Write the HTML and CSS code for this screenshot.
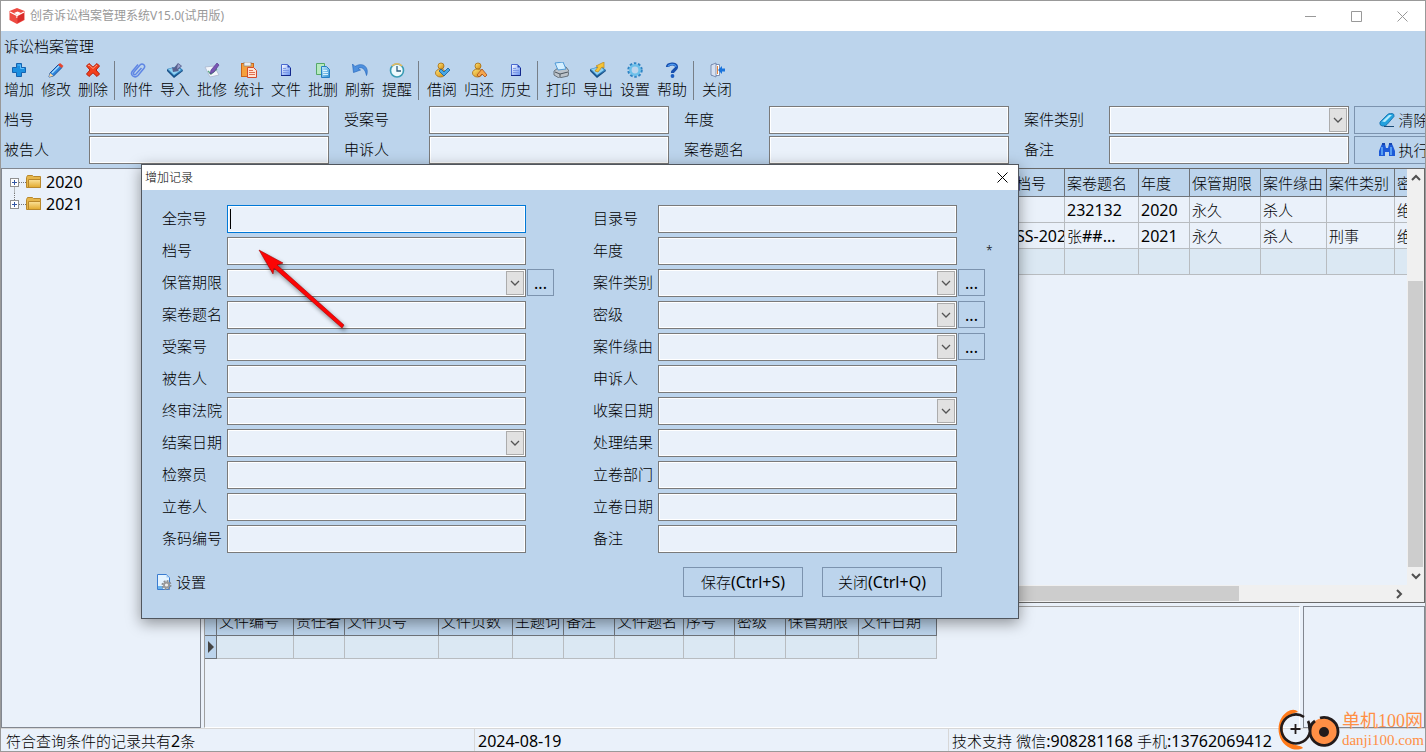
FILE: index.html
```html
<!DOCTYPE html>
<html lang="zh-CN">
<head>
<meta charset="utf-8">
<title>创奇诉讼档案管理系统V15.0(试用版)</title>
<link rel="stylesheet" href="styles.css">
</head>
<body>
<svg class="sprite" aria-hidden="true">
  <defs>
    <linearGradient id="gold" x1="0" y1="0" x2="1" y2="1"><stop offset="0" stop-color="#ffe57a"/><stop offset="1" stop-color="#d08a10"/></linearGradient>
    <linearGradient id="sky" x1="0" y1="0" x2="1" y2="1"><stop offset="0" stop-color="#c4ecff"/><stop offset="1" stop-color="#2f8fd0"/></linearGradient>
    <linearGradient id="doc" x1="0" y1="0" x2="1" y2="1"><stop offset="0" stop-color="#ffffff"/><stop offset="1" stop-color="#5f8cf0"/></linearGradient>
    <linearGradient id="folder" x1="0" y1="0" x2="0" y2="1"><stop offset="0" stop-color="#fbe29a"/><stop offset="1" stop-color="#e2a92c"/></linearGradient>
  </defs>
  <symbol id="chev" viewBox="0 0 10 10"><path d="M1 3l4 4 4-4" fill="none" stroke="#555" stroke-width="1.3"/></symbol>
  <symbol id="file" viewBox="0 0 16 16"><path d="M3.500 2.500h6l3 3v8h-9z" fill="url(#doc)" stroke="#4a6ad0"/><path d="M9.500 2.500v3h3z" fill="#2746b8"/><path d="M5 6.500h3M5 8.500h6M5 10.500h6" stroke="#7d9ae8"/><path d="M3 13.500h9.500V6" fill="none" stroke="#14288c"/></symbol>
  <symbol id="person" viewBox="0 0 16 16"><ellipse cx="6.500" cy="11" rx="5" ry="4" fill="url(#gold)" stroke="#a86c10" stroke-width=".8"/><circle cx="7" cy="4" r="3" fill="url(#gold)" stroke="#a86c10" stroke-width=".8"/></symbol>
  <symbol id="tray" viewBox="0 0 16 16"><path d="M0 7l11-3 5 4-9 7z" fill="#2c7ebb"/><path d="M1 7l10-2 3 3-7 5z" fill="#8fd0f2"/><path d="M0 7v2l7 7 9-7V8l-9 6z" fill="#174f86"/></symbol>
</svg>

<div class="window">
  <header class="titlebar">
    <svg class="logo" viewBox="0 0 18 18"><path d="M9 1l7.500 3v9L9 17l-7.500-4V4z" fill="#ee4a42"/><path d="M2 5l7 3.500L16 5M9 8.500V11" fill="none" stroke="#fff" stroke-width="1.200"/><path d="M6 6l3.500-1.500L13 6 9.500 8z" fill="#fff"/><path d="M9.500 9.500L16 6v6.500L9.500 16z" fill="#d92c2b"/></svg>
    <h1>创奇诉讼档案管理系统V15.0(试用版)</h1>
    <div class="winbtns">
      <button aria-label="最小化"><svg viewBox="0 0 11 11"><path d="M0 5.500h11"/></svg></button>
      <button aria-label="最大化"><svg viewBox="0 0 11 11"><path d="M.5.500h10v10H.5z"/></svg></button>
      <button aria-label="关闭"><svg viewBox="0 0 11 11"><path d="M.5.500l10 10M10.500.500l-10 10"/></svg></button>
    </div>
  </header>

  <div class="menubar">诉讼档案管理</div>

  <nav class="toolbar">
    <button><svg viewBox="0 0 16 16"><path d="M5.500 1.500h5v4h4v5h-4v4h-5v-4h-4v-5h4z" fill="#1c8fe0" stroke="#1563b0"/><path d="M6.500 3h3v3.500H13" fill="none" stroke="#5fc0ff"/></svg>增加</button>
    <button><svg viewBox="0 0 16 16"><path d="M2 11L10.500 2.500l3.500 3L5.500 14 1 15z" fill="#2f86dc" stroke="#174f9c"/><path d="M10 3l2-2 3.500 3-2 2z" fill="#e6452e"/><path d="M1 15l1-4 3.500 3z" fill="#ffd9a0"/><path d="M4 11l7-7" stroke="#a6dcff" stroke-width="1.500"/></svg>修改</button>
    <button><svg viewBox="0 0 16 16"><path d="M1.500 4L4 1.500l4 3.700L12 1.500 14.500 4 11 8l3.500 4-2.500 2.500-4-3.700-4 3.700L1.500 12 5 8z" fill="#f3401c" stroke="#b81c08"/><path d="M3 4l1-1 4 3.500L12 3" fill="none" stroke="#ff9a78"/></svg>删除</button>
    <i class="sep"></i>
    <button><svg viewBox="0 0 16 16"><path d="M11.500 6L6 12c-1.500 1.500-3.500 0-2-2l6-7c2.500-2.500 6 .5 4 3.200L8 13.500c-3.500 3.300-8.500-.5-5.500-4.500L8 2.500" fill="none" stroke="#5f86e4" stroke-width="1.500"/></svg>附件</button>
    <button><svg viewBox="0 0 16 16"><use href="#tray"/><path d="M6 10l-1-5 2 1 4-5 4 3-4 4 1 1z" fill="#59608e"/><path d="M11 2l3 2-4 3z" fill="#9aa0cc"/></svg>导入</button>
    <button><svg viewBox="0 0 16 16"><path d="M1 5l9-1 5 9-9 2z" fill="#f3f6fc" stroke="#a9b6ce" stroke-width=".8"/><path d="M4 9l3 3 6-5" fill="none" stroke="#5ca888" stroke-width="1.300"/><path d="M6 12l1-4 6-7 2 2-5 7z" fill="#7a55b4" stroke="#4b3384" stroke-width=".6"/></svg>批修</button>
    <button><svg viewBox="0 0 16 16"><rect x=".5" y="1.500" width="12" height="13" fill="#f5a03c" stroke="#c9661c"/><rect x="3" y="0" width="7" height="4" fill="#e9edf2" stroke="#888" stroke-width=".7"/><path d="M6.500 5.500h6l3 3v7h-9z" fill="#ffe2d2" stroke="#d44a2c"/><path d="M8 8.500h4M8 10.500h6M8 12.500h6" stroke="#e07050"/></svg>统计</button>
    <button><svg viewBox="0 0 16 16"><use href="#file"/></svg>文件</button>
    <button><svg viewBox="0 0 16 16"><path d="M1.500 1.500h8v11h-8z" fill="#b6e9bf" stroke="#55a868"/><path d="M6.500 4.500h5l3 3v8h-8z" fill="url(#sky)" stroke="#247ec4"/><path d="M8 8.500h4M8 10.500h5M8 12.500h5" stroke="#d8f2ff"/></svg>批删</button>
    <button><svg viewBox="0 0 16 16"><path d="M.5 2l1 8.500 7-2.500-2.500-1.500c3.500-2 7-.5 8.500 7C17.500 5.500 11-.5 3 4.500z" fill="#4d90df" stroke="#2668bd" stroke-width=".7"/></svg>刷新</button>
    <button><svg viewBox="0 0 16 16"><circle cx="8" cy="8.500" r="6.500" fill="#eefafd" stroke="#3a9cb4" stroke-width="1.600"/><path d="M3 4a6.500 6.500 0 0 1 10 0" fill="none" stroke="#f0bc58" stroke-width="1.500"/><path d="M8 4v5h4" fill="none" stroke="#2c5d7c" stroke-width="1.300"/></svg>提醒</button>
    <i class="sep"></i>
    <button><svg viewBox="0 0 16 16"><use href="#person"/><path d="M5 9l2-2 3 3 4-4 2 2-6 6z" fill="#48a8e8" stroke="#135c9c" stroke-width=".8"/></svg>借阅</button>
    <button><svg viewBox="0 0 16 16"><use href="#person"/><path d="M6 13l5-6 5 6-2 2-3-3-3 3z" fill="#f4a64c" stroke="#a94c18" stroke-width=".8"/></svg>归还</button>
    <button><svg viewBox="0 0 16 16"><use href="#file"/></svg>历史</button>
    <i class="sep"></i>
    <button><svg viewBox="0 0 16 16"><path d="M1 9l4-3 8-1 3 4-1 5-9 2-5-3z" fill="#bcc3ca" stroke="#5f6972" stroke-width=".9"/><path d="M2 1l8-1 3 7-8 1z" fill="#d5efff" stroke="#4292d4" stroke-width=".9"/><path d="M2 10l5 2 8-2M7 12v3" fill="none" stroke="#4d565f"/></svg>打印</button>
    <button><svg viewBox="0 0 16 16"><use href="#tray"/><path d="M5 9l3-4-2-1 8-4v6l-2-1-4 5z" fill="#f6c436" stroke="#b8861c" stroke-width=".7"/></svg>导出</button>
    <button><svg viewBox="0 0 16 16"><circle cx="8" cy="8" r="6.500" fill="none" stroke="#2f84c4" stroke-width="2.500" stroke-dasharray="2.500 1.600"/><circle cx="8" cy="8" r="4.700" fill="none" stroke="#6cc0ea" stroke-width="2.600"/></svg>设置</button>
    <button><svg viewBox="0 0 16 16"><path d="M3.500 5C3.500 1.500 12.500.500 12.500 5c0 3-4 2.800-4 6" fill="none" stroke="#174fae" stroke-width="3.200"/><path d="M4 4.500C5 1.500 12 1.500 12 5" fill="none" stroke="#4d9af0" stroke-width="1.200"/><circle cx="8.500" cy="14" r="1.900" fill="#1b5cc0"/></svg>帮助</button>
    <i class="sep"></i>
    <button><svg viewBox="0 0 16 16"><path d="M2.500 2.500h8v11h-8z" fill="#fff" stroke="#7d90b4"/><path d="M2 3l5-2v14l-5-2z" fill="#d7e1f1" stroke="#697da4" stroke-width=".8"/><path d="M8.500 4v8" stroke="#e4843c"/><path d="M9 8l4-4v2.500h3v3h-3V12z" fill="#1974dc"/></svg>关闭</button>
  </nav>

  <form class="search">
    <div class="fields">
      <label for="s1">档号</label><input id="s1">
      <label for="s2">受案号</label><input id="s2">
      <label for="s3">年度</label><input id="s3">
      <label for="s4">案件类别</label><span class="combo"><select id="s4"></select><span class="drop"><svg><use href="#chev"/></svg></span></span>
      <label for="s5">被告人</label><input id="s5">
      <label for="s6">申诉人</label><input id="s6">
      <label for="s7">案卷题名</label><input id="s7">
      <label for="s8">备注</label><input id="s8">
    </div>
    <div class="actions">
      <button type="button"><svg viewBox="0 0 16 16"><path d="M1 10l7.500-7.500q1-1 3-1h2q2 .5 1.500 3L8 12.500Q7 14 5 14H3q-3-1-2-4z" fill="#22a2de" stroke="#126aa8" stroke-width=".8"/><path d="M3 9.500L10 3h3L6 10z" fill="#b4ecff"/><path d="M5 14.500h10" stroke="#1a4c78"/></svg>清除</button>
      <button type="button"><svg viewBox="0 0 16 16"><path d="M0 14V9l2-5 1-2h3l1 4h2l1-4h3l1 2 2 5v5h-6v-4H6v4z" fill="#1c5ad8"/><path d="M3 5v8M12 5v8" stroke="#78c0ff" stroke-width="1.300"/><path d="M3 1h3v2H3zM10 1h3v2h-3z" fill="#1746ae"/></svg>执行</button>
    </div>
  </form>

  <main class="work">
    <ul class="tree">
      <li><svg class="node" viewBox="0 0 16 22"><path d="M4.500 15.500v7" stroke="#777" stroke-dasharray="1 1"/><path d="M9 11.500h7" stroke="#777" stroke-dasharray="1 1"/><rect x=".5" y="7.500" width="8" height="8" fill="#fff" stroke="#919191"/><path d="M2 11.500h5M4.500 9v5" stroke="#3357a4"/></svg><svg class="folder" viewBox="0 0 16 16"><path d="M.5 3.500l1-2h5l1 1h7v11H.5z" fill="#e6b64b" stroke="#b9882c"/><path d="M2.500 5.500h12v8h-12z" fill="url(#folder)" stroke="#b9882c"/></svg><span class="en">2020</span></li>
      <li><svg class="node" viewBox="0 0 16 22"><path d="M4.500 0v7M9 11.500h7" stroke="#777" stroke-dasharray="1 1"/><rect x=".5" y="7.500" width="8" height="8" fill="#fff" stroke="#919191"/><path d="M2 11.500h5M4.500 9v5" stroke="#3357a4"/></svg><svg class="folder" viewBox="0 0 16 16"><path d="M.5 3.500l1-2h5l1 1h7v11H.5z" fill="#e6b64b" stroke="#b9882c"/><path d="M2.500 5.500h12v8h-12z" fill="url(#folder)" stroke="#b9882c"/></svg><span class="en">2021</span></li>
    </ul>

    <div class="content">
      <section class="records">
        <div class="view">
          <table class="grid">
            <colgroup><col><col class="w51"><col class="w74"><col class="w51"><col class="w71"><col class="w66"><col class="w68"><col class="w12"></colgroup>
            <thead><tr><th></th><th>档号</th><th>案卷题名</th><th>年度</th><th>保管期限</th><th>案件缘由</th><th>案件类别</th><th>密</th></tr></thead>
            <tbody>
              <tr><td></td><td></td><td class="en">232132</td><td class="en">2020</td><td>永久</td><td>杀人</td><td></td><td>绝</td></tr>
              <tr><td></td><td class="en">SS-202</td><td>张<span class="en">##...</span></td><td class="en">2021</td><td>永久</td><td>杀人</td><td>刑事</td><td>绝</td></tr>
              <tr class="blank"><td></td><td></td><td></td><td></td><td></td><td></td><td></td><td></td></tr>
            </tbody>
          </table>
        </div>
        <div class="vbar"><svg viewBox="0 0 10 10"><path d="M1 7l4-4 4 4"/></svg><i class="thumb"></i><svg viewBox="0 0 10 10"><path d="M1 3l4 4 4-4"/></svg></div>
        <div class="hbar"><i class="thumb"></i><svg viewBox="0 0 10 10"><path d="M3 1l4 4-4 4"/></svg></div>
      </section>

      <section class="lower">
        <div class="files">
          <table class="grid small">
            <colgroup><col class="w12"><col class="w77"><col class="w51"><col class="w94"><col class="w74"><col class="w51"><col class="w51"><col class="w69"><col class="w51"><col class="w51"><col class="w73"><col class="w78"></colgroup>
            <thead><tr><th></th><th>文件编号</th><th>责任者</th><th>文件页号</th><th>文件页数</th><th>主题词</th><th>备注</th><th>文件题名</th><th>序号</th><th>密级</th><th>保管期限</th><th>文件日期</th></tr></thead>
            <tbody><tr class="blank"><th class="mark"><svg viewBox="0 0 6 12"><path d="M0 0l6 6-6 6z" fill="#444"/></svg></th><td></td><td></td><td></td><td></td><td></td><td></td><td></td><td></td><td></td><td></td><td></td></tr></tbody>
          </table>
        </div>
        <div class="preview"></div>
      </section>
    </div>
  </main>

  <footer class="status">
    <span class="count">符合查询条件的记录共有<b class="en">2</b>条</span>
    <span class="date en">2024-08-19</span>
    <span class="support">技术支持<b class="en"> </b>微信<b class="en">:908281168 </b>手机<b class="en">:13762069412</b></span>
  </footer>
</div>

<div class="dialog" role="dialog" aria-labelledby="dlg">
  <header><h2 id="dlg">增加记录</h2><button aria-label="关闭"><svg viewBox="0 0 11 11"><path d="M.5.500l10 10M10.500.500l-10 10"/></svg></button></header>
  <form>
    <div class="cols">
      <div class="col">
        <label for="a1">全宗号</label><span class="active"><input id="a1"><i class="caret"></i></span><i></i>
        <label for="a2">档号</label><input id="a2"><i></i>
        <label for="a3">保管期限</label><span class="combo"><select id="a3"></select><span class="drop"><svg><use href="#chev"/></svg></span></span><button type="button" class="more en">...</button>
        <label for="a4">案卷题名</label><input id="a4"><i></i>
        <label for="a5">受案号</label><input id="a5"><i></i>
        <label for="a6">被告人</label><input id="a6"><i></i>
        <label for="a7">终审法院</label><input id="a7"><i></i>
        <label for="a8">结案日期</label><span class="combo"><select id="a8"></select><span class="drop"><svg><use href="#chev"/></svg></span></span><i></i>
        <label for="a9">检察员</label><input id="a9"><i></i>
        <label for="a10">立卷人</label><input id="a10"><i></i>
        <label for="a11">条码编号</label><input id="a11"><i></i>
      </div>
      <div class="col">
        <label for="b1">目录号</label><input id="b1"><i></i>
        <label for="b2">年度</label><input id="b2"><span class="star">*</span>
        <label for="b3">案件类别</label><span class="combo"><select id="b3"></select><span class="drop"><svg><use href="#chev"/></svg></span></span><button type="button" class="more en">...</button>
        <label for="b4">密级</label><span class="combo"><select id="b4"></select><span class="drop"><svg><use href="#chev"/></svg></span></span><button type="button" class="more en">...</button>
        <label for="b5">案件缘由</label><span class="combo"><select id="b5"></select><span class="drop"><svg><use href="#chev"/></svg></span></span><button type="button" class="more en">...</button>
        <label for="b6">申诉人</label><input id="b6"><i></i>
        <label for="b7">收案日期</label><span class="combo"><select id="b7"></select><span class="drop"><svg><use href="#chev"/></svg></span></span><i></i>
        <label for="b8">处理结果</label><input id="b8"><i></i>
        <label for="b9">立卷部门</label><input id="b9"><i></i>
        <label for="b10">立卷日期</label><input id="b10"><i></i>
        <label for="b11">备注</label><input id="b11"><i></i>
      </div>
    </div>
    <div class="foot">
      <button type="button" class="setup"><svg viewBox="0 0 16 16"><path d="M1.500.500h9l3 3v12h-12z" fill="#e4f3ff" stroke="#3a7cd0"/><path d="M10.500.500v3h3z" fill="#9cc8f4"/><path d="M2 12h5v3H2z" fill="#6ab4ec"/><circle cx="10.500" cy="11" r="4" fill="none" stroke="#8a8f94" stroke-width="2" stroke-dasharray="1.800 1.300"/><circle cx="10.500" cy="11" r="2.500" fill="#eee" stroke="#999" stroke-width="1.800"/></svg>设置</button>
      <button type="button" class="cmd">保存<span class="en">(Ctrl+S)</span></button>
      <button type="button" class="cmd">关闭<span class="en">(Ctrl+Q)</span></button>
    </div>
  </form>
  <svg class="pointer" viewBox="0 0 96 90"><path d="M2 2l24 13-6 2L87 77l-2 3L17 20l-1 6z" fill="#fb0505" stroke="#a30000" stroke-width=".6"/></svg>
</div>

<div class="brand">
  <svg viewBox="0 0 64 44"><path d="M21 4C17-1 9 3 5 9c-7 11-3 26 8 31 4 2 9 2 13 0-2-3-7-2-10-4C6 31 3 21 8 12c3-5 8-7 13-8z" fill="#ff7a1a"/><path d="M27 9A14.500 14.500 0 1 0 33 24" fill="none" stroke="#221b1b" stroke-width="2.600"/><path d="M13.500 21h10M18.500 16v10" stroke="#221b1b" stroke-width="1.800"/><circle cx="47" cy="24" r="14" fill="#ff8f45"/><path d="M31 13c2 3 1 6 2 10a14 14 0 1 0 10-13M38 13c-3 2-5 6-5 10" fill="none" stroke="#221b1b" stroke-width="2.800"/><circle cx="47" cy="24" r="5" fill="#221b1b"/></svg>
  <div><strong>单机100网</strong><span>danji100.com</span></div>
</div>
</body>
</html>
```
FILE: styles.css
```css
* { box-sizing: border-box; }
body {
  margin: 0;
  position: relative;
  height: 100vh;
  overflow: hidden;
  font: 300 15px/20px "Noto Sans CJK SC", sans-serif;
  color: #000;
}
.sprite { position: absolute; width: 0; height: 0; }
.en { font-family: "Noto Sans", sans-serif; font-size: 16px; font-weight: 400; }
b.en { white-space: pre; }
svg { display: block; flex: none; }
button { font: inherit; color: inherit; background: none; border: 0; padding: 0; }

.window {
  height: 100%;
  display: flex;
  flex-direction: column;
  border: 1px solid #999;
  background: #bcd4ec;
  overflow: hidden;
}

.titlebar { flex: none; height: 30px; display: flex; align-items: center; background: #fff; padding-left: 7px; }
.logo { width: 18px; height: 18px; }
h1 { margin: 0 auto 0 4px; font-size: 12px; font-weight: 400; font-family: "Noto Sans", "Noto Sans CJK SC", sans-serif; color: #999; }
.winbtns { display: flex; }
.winbtns button { width: 46px; height: 30px; display: grid; place-items: center; }
.winbtns svg, .dialog header svg { width: 11px; height: 11px; fill: none; stroke: #999; }

.menubar { flex: none; height: 30px; padding: 5px 3px; }

.toolbar { flex: none; display: flex; height: 40px; }
.toolbar button { width: 37px; display: flex; flex-direction: column; align-items: center; gap: 1px; padding: 1px 1px 0 0; white-space: nowrap; }
.toolbar svg { width: 16px; height: 16px; }
.sep { width: 8px; flex: none; display: block; }
.sep::before { content: ""; display: block; width: 1px; height: 39px; margin-left: 2px; background: #777f88; }

.search { flex: none; display: flex; gap: 5px; padding: 5px 0 4px 3px; }
.fields { display: grid; grid-template-columns: 85px 240px 100px 240px 100px 240px 100px 240px; gap: 2px 0; align-items: center; }
.search label, .col label { padding-bottom: 2px; }
.fields label:not(:nth-of-type(4n + 1)) { padding-left: 15px; }
.actions { display: grid; gap: 2px; }
.actions button { width: 100px; display: flex; align-items: center; justify-content: center; gap: 3px; border: 1px solid #7c93ae; }
.actions svg { width: 16px; height: 16px; }

input, .combo {
  width: 100%;
  height: 28px;
  margin: 0;
  padding: 2px;
  border: 1px solid #7a7a7a;
  border-radius: 0;
  outline: 0;
  background: #eaf1fa;
  box-shadow: inset 0 0 0 1px #fff;
  font: inherit;
}
.combo { display: grid; padding: 1px; }
.combo select { grid-area: 1 / 1; width: 100%; appearance: none; border: 0; outline: 0; background: none; font: inherit; }
.drop { grid-area: 1 / 1; justify-self: end; width: 18px; display: grid; place-items: center; border: 1px solid #acacac; background: #e1e1e1; pointer-events: none; }
.drop svg { width: 10px; height: 10px; }

.work { flex: 1; min-height: 0; display: flex; gap: 3px; background: #eaf1fa; }
.tree { flex: none; width: 200px; margin: 0; padding: 2px 8px; list-style: none; border: 1px solid #828790; }
.tree li { height: 22px; display: flex; align-items: center; }
.node { width: 16px; height: 22px; }
.folder { width: 16px; height: 16px; }
.tree .en { margin-left: 4px; }

.content { flex: 1; min-width: 0; display: flex; flex-direction: column; gap: 3px; }
.records {
  flex: 1;
  min-height: 0;
  display: grid;
  grid-template-columns: 1fr 17px;
  grid-template-rows: 1fr 17px;
  background: #f0f0f0;
  border: 1px solid #696969;
}
.view { overflow: hidden; background: #eaf1fa; }
.grid { table-layout: fixed; border-collapse: separate; border-spacing: 0; width: 100%; }
.grid th, .grid td { padding: 0 0 0 2px; border: solid #b8bcc0; border-width: 0 1px 1px 0; text-align: left; font-weight: 300; white-space: nowrap; overflow: hidden; height: 26px; }
.grid td.en { font-weight: 400; }
.grid th { height: 28px; background: #bcd4ec; border-color: #6e7379; }
.grid tbody td { background: #eaf1fa; }
.grid .blank td { background: #dbe8f3; }
.grid.small { width: 732px; }
.small thead th { height: 29px; }
.small tbody th, .small tbody td { height: 23px; }
.small .mark { padding-left: 3px; }
.mark svg { width: 6px; height: 12px; }
.view th:last-child, .view td:last-child { border-right: 0; }
.w12 { width: 12px; } .w51 { width: 51px; } .w66 { width: 66px; }
.w68 { width: 68px; } .w69 { width: 69px; } .w71 { width: 71px; } .w73 { width: 73px; }
.w74 { width: 74px; } .w77 { width: 77px; } .w78 { width: 78px; } .w94 { width: 94px; }

.vbar, .hbar { display: flex; align-items: center; background: #f0f0f0; }
.vbar { flex-direction: column; padding: 4px 0; }
.hbar svg { margin: 0 3px 0 auto; }
.vbar svg, .hbar svg { width: 10px; height: 10px; fill: none; stroke: #505050; stroke-width: 2; }
.thumb { display: block; background: #cdcdcd; }
.vbar .thumb { width: 15px; height: 70%; margin: auto 0 4px; }
.hbar .thumb { width: 86%; height: 15px; }

.lower { flex: none; height: 122px; display: flex; gap: 3px; }
.files { flex: 1; min-width: 0; overflow: hidden; border: 1px solid #a0a0a0; border-right-color: #fff; border-bottom-color: #fff; }
.preview { width: 122px; border: 1px solid #828790; }

.status { flex: none; height: 23px; display: flex; background: #eaf1fa; border-top: 1px solid #d7d7d7; line-height: 24px; white-space: nowrap; }
.status span { padding-left: 3px; border-left: 1px solid #d7d7d7; }
.status .count { width: 473px; padding-left: 5px; border: 0; }
.status .date { flex: 1; }
.status .support { width: 477px; }

.dialog {
  position: absolute;
  left: 141px;
  top: 164px;
  width: 878px;
  background: #bcd4ec;
  border: 1px solid #50565e;
  box-shadow: 0 4px 14px rgba(0, 0, 0, .4);
}
.dialog header { height: 25px; display: flex; justify-content: space-between; background: #fff; }
h2 { margin: 0; padding: 2px 3px; font-size: 12px; font-weight: 300; line-height: 20px; }
.dialog header button { width: 31px; display: grid; place-items: center; }
.dialog header svg { stroke: #000; }
.cols { display: flex; gap: 35px; padding: 15px 20px 0; }
.col { display: grid; grid-template-columns: 65px 299px 32px; grid-auto-rows: 28px; row-gap: 4px; align-items: center; white-space: nowrap; }
.more { width: 27px; height: 27px; margin: 0 0 1px 1px; border: 1px solid #7c93ae; }
.star { padding-left: 29px; font-family: "Noto Sans", sans-serif; font-size: 12px; }
.active { display: grid; align-items: center; }
.active input, .caret { grid-area: 1 / 1; }
.active input { border-color: #0078d7; }
.caret { width: 1px; height: 20px; margin-left: 3px; background: #000; }
.foot { display: flex; align-items: center; gap: 19px; padding: 14px 76px 21px 14px; }
.setup { display: flex; align-items: center; gap: 4px; margin-right: auto; }
.setup svg { width: 16px; height: 16px; }
.cmd { width: 120px; height: 30px; border: 1px solid #7c93ae; }
.pointer { position: absolute; left: 115px; top: 83px; width: 96px; height: 90px; filter: drop-shadow(2px 3px 2px rgba(0, 0, 0, .45)); pointer-events: none; }

.brand { position: absolute; right: 2px; bottom: 0; display: flex; align-items: center; gap: 1px; color: #ff8f45; }
.brand svg { width: 64px; height: 44px; }
.brand strong, .brand span { display: block; font-weight: 400; font-family: "Liberation Serif", "Noto Sans CJK SC", serif; white-space: nowrap; }
.brand strong { font-size: 18px; line-height: 20px; }
.brand span { font-size: 15px; line-height: 18px; }
```
